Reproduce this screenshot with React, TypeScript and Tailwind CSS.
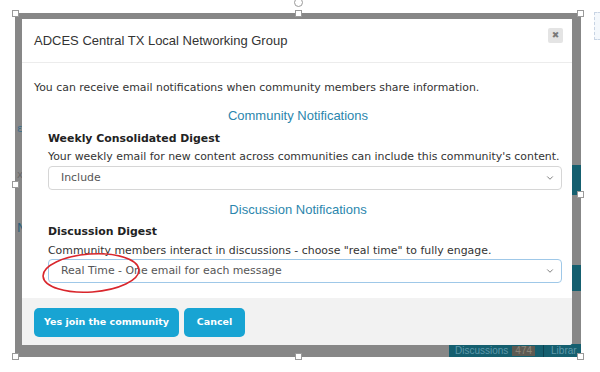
import { ChevronDown } from "lucide-react";

const verdana = { fontFamily: '"DejaVu Sans", Verdana, sans-serif' };
const arial = { fontFamily: '"Liberation Sans", Arial, sans-serif' };

function Handle({ className }: { className: string }) {
  return (
    <div
      className={`absolute w-[7px] h-[7px] bg-white border border-[#9a9a9a] ${className}`}
    />
  );
}

function Select({ value, focused }: { value: string; focused?: boolean }) {
  return (
    <div
      className={`h-[24px] flex items-center justify-between pl-[12px] pr-[6px] rounded-[4px] border bg-white text-[10.9px] text-[#555] ${
        focused ? "border-[#9fc8e8]" : "border-[#d6d6d6]"
      }`}
    >
      <span>{value}</span>
      <ChevronDown size={10} strokeWidth={2} className="text-[#666]" />
    </div>
  );
}

function SectionHeading({ children }: { children: string }) {
  return (
    <h2
      className="h-[20px] leading-[20px] text-center text-[13px] text-[#2b86ad]"
      style={arial}
    >
      {children}
    </h2>
  );
}

export default function App() {
  return (
    <div
      className="relative w-[600px] h-[372px] bg-white overflow-hidden"
      style={verdana}
    >
      {/* stray icon from the document */}
      <div className="absolute left-[594px] top-[12px] w-[10px] h-[28px] border border-[#c8d4e4] border-dashed bg-[#f4f8fc]" />

      {/* image frame */}
      <div className="relative ml-[15px] mt-[13px] w-[566px] h-[344px] bg-[#878787] pl-[7px] pt-[6px]">
        {/* page fragments showing behind the frame */}
        <div className="absolute left-[557px] top-[152px] w-[9px] h-[30px] bg-[#155f6f]" />
        <div className="absolute left-[557px] top-[252px] w-[9px] h-[26px] bg-[#155f6f]" />
        <div
          className="absolute left-[434px] top-[331px] h-[13px] w-[132px] bg-[#155f6f] flex items-center text-[10px] leading-none text-[#5f98aa] whitespace-nowrap"
          style={arial}
        >
          <span className="pl-[6px]">Discussions</span>
          <span className="ml-[4px] px-[3px] bg-[#5d5a52] text-[#8a857a]">474</span>
          <span className="ml-[8px] w-px h-[12px] bg-[#0d4452]" />
          <span className="ml-[7px]">Librar</span>
        </div>
        <span className="absolute left-[2px] top-[108px] text-[10px] text-[#3d6d8a]">ε</span>
        <span className="absolute left-[2px] top-[154px] text-[10px] text-[#6a6a6a]">x</span>
        <span className="absolute left-[2px] top-[206px] text-[12px] text-[#2d5f7a]">N</span>

        {/* dialog */}
        <div className="relative w-[550px] h-[326px] bg-white rounded-br-[3px] flex flex-col overflow-hidden">
          <div className="h-[44px] shrink-0 flex items-center justify-between pl-[12px] pr-[9px] border-b border-[#ececec]">
            <span className="text-[13px] text-[#333]" style={arial}>
              ADCES Central TX Local Networking Group
            </span>
            <span className="w-[15px] h-[15px] mt-[-10px] rounded-[2px] bg-[#e4e4e4] flex items-center justify-center text-[9px] text-[#7a7a7a] leading-none">
              ✖
            </span>
          </div>

          <div className="flex-1 flex flex-col pl-[12px] pr-[10px] pt-[17px] text-[10.9px] leading-[16px] whitespace-nowrap">
            <p className="h-[16px] text-[#333]">
              You can receive email notifications when community members share
              information.
            </p>
            <div className="mt-[10px]">
              <SectionHeading>Community Notifications</SectionHeading>
            </div>
            <div className="pl-[14px] flex flex-col">
              <div className="mt-[5px] h-[16px] font-bold text-[#222]">
                Weekly Consolidated Digest
              </div>
              <div className="mt-[2px] h-[16px] text-[#333]">
                Your weekly email for new content across communities can include
                this community's content.
              </div>
              <div className="mt-[1px]">
                <Select value="Include" />
              </div>
            </div>
            <div className="mt-[10px]">
              <SectionHeading>Discussion Notifications</SectionHeading>
            </div>
            <div className="pl-[14px] flex flex-col">
              <div className="mt-[4px] h-[16px] font-bold text-[#222]">
                Discussion Digest
              </div>
              <div className="mt-[3px] h-[16px] text-[#333]">
                Community members interact in discussions - choose "real time"
                to fully engage.
              </div>
              <Select value="Real Time - One email for each message" focused />
            </div>
          </div>

          <div className="h-[47px] shrink-0 bg-[#f2f2f2] flex items-start gap-[5px] pl-[12px] pt-[10px]">
            <button className="h-[29px] w-[145px] rounded-[5px] bg-[#18a4d3] text-white text-[9.5px] font-bold">
              Yes join the community
            </button>
            <button className="h-[29px] w-[61px] rounded-[5px] bg-[#18a4d3] text-white text-[9.5px] font-bold">
              Cancel
            </button>
          </div>

          {/* red annotation ellipse */}
          <svg
            className="absolute left-0 top-0 pointer-events-none"
            width="550"
            height="326"
          >
            <ellipse
              cx="69"
              cy="254"
              rx="48"
              ry="19"
              fill="none"
              stroke="#d9262c"
              strokeWidth="1.6"
              transform="rotate(-4 69 254)"
            />
          </svg>
        </div>

        {/* selection handles */}
        <Handle className="left-[-3px] top-[-3px]" />
        <Handle className="left-[280px] top-[-3px]" />
        <Handle className="right-[-3px] top-[-3px]" />
        <Handle className="left-[-3px] top-[168px]" />
        <Handle className="right-[-3px] top-[178px]" />
        <Handle className="left-[-3px] bottom-[-3px]" />
        <Handle className="left-[280px] bottom-[-3px]" />
        <Handle className="right-[-3px] bottom-[-3px]" />
      </div>
      {/* rotate handle */}
      <div className="absolute left-[294px] top-[-2px] w-[9px] h-[9px] rounded-full border border-[#9a9a9a] bg-white" />
    </div>
  );
}
